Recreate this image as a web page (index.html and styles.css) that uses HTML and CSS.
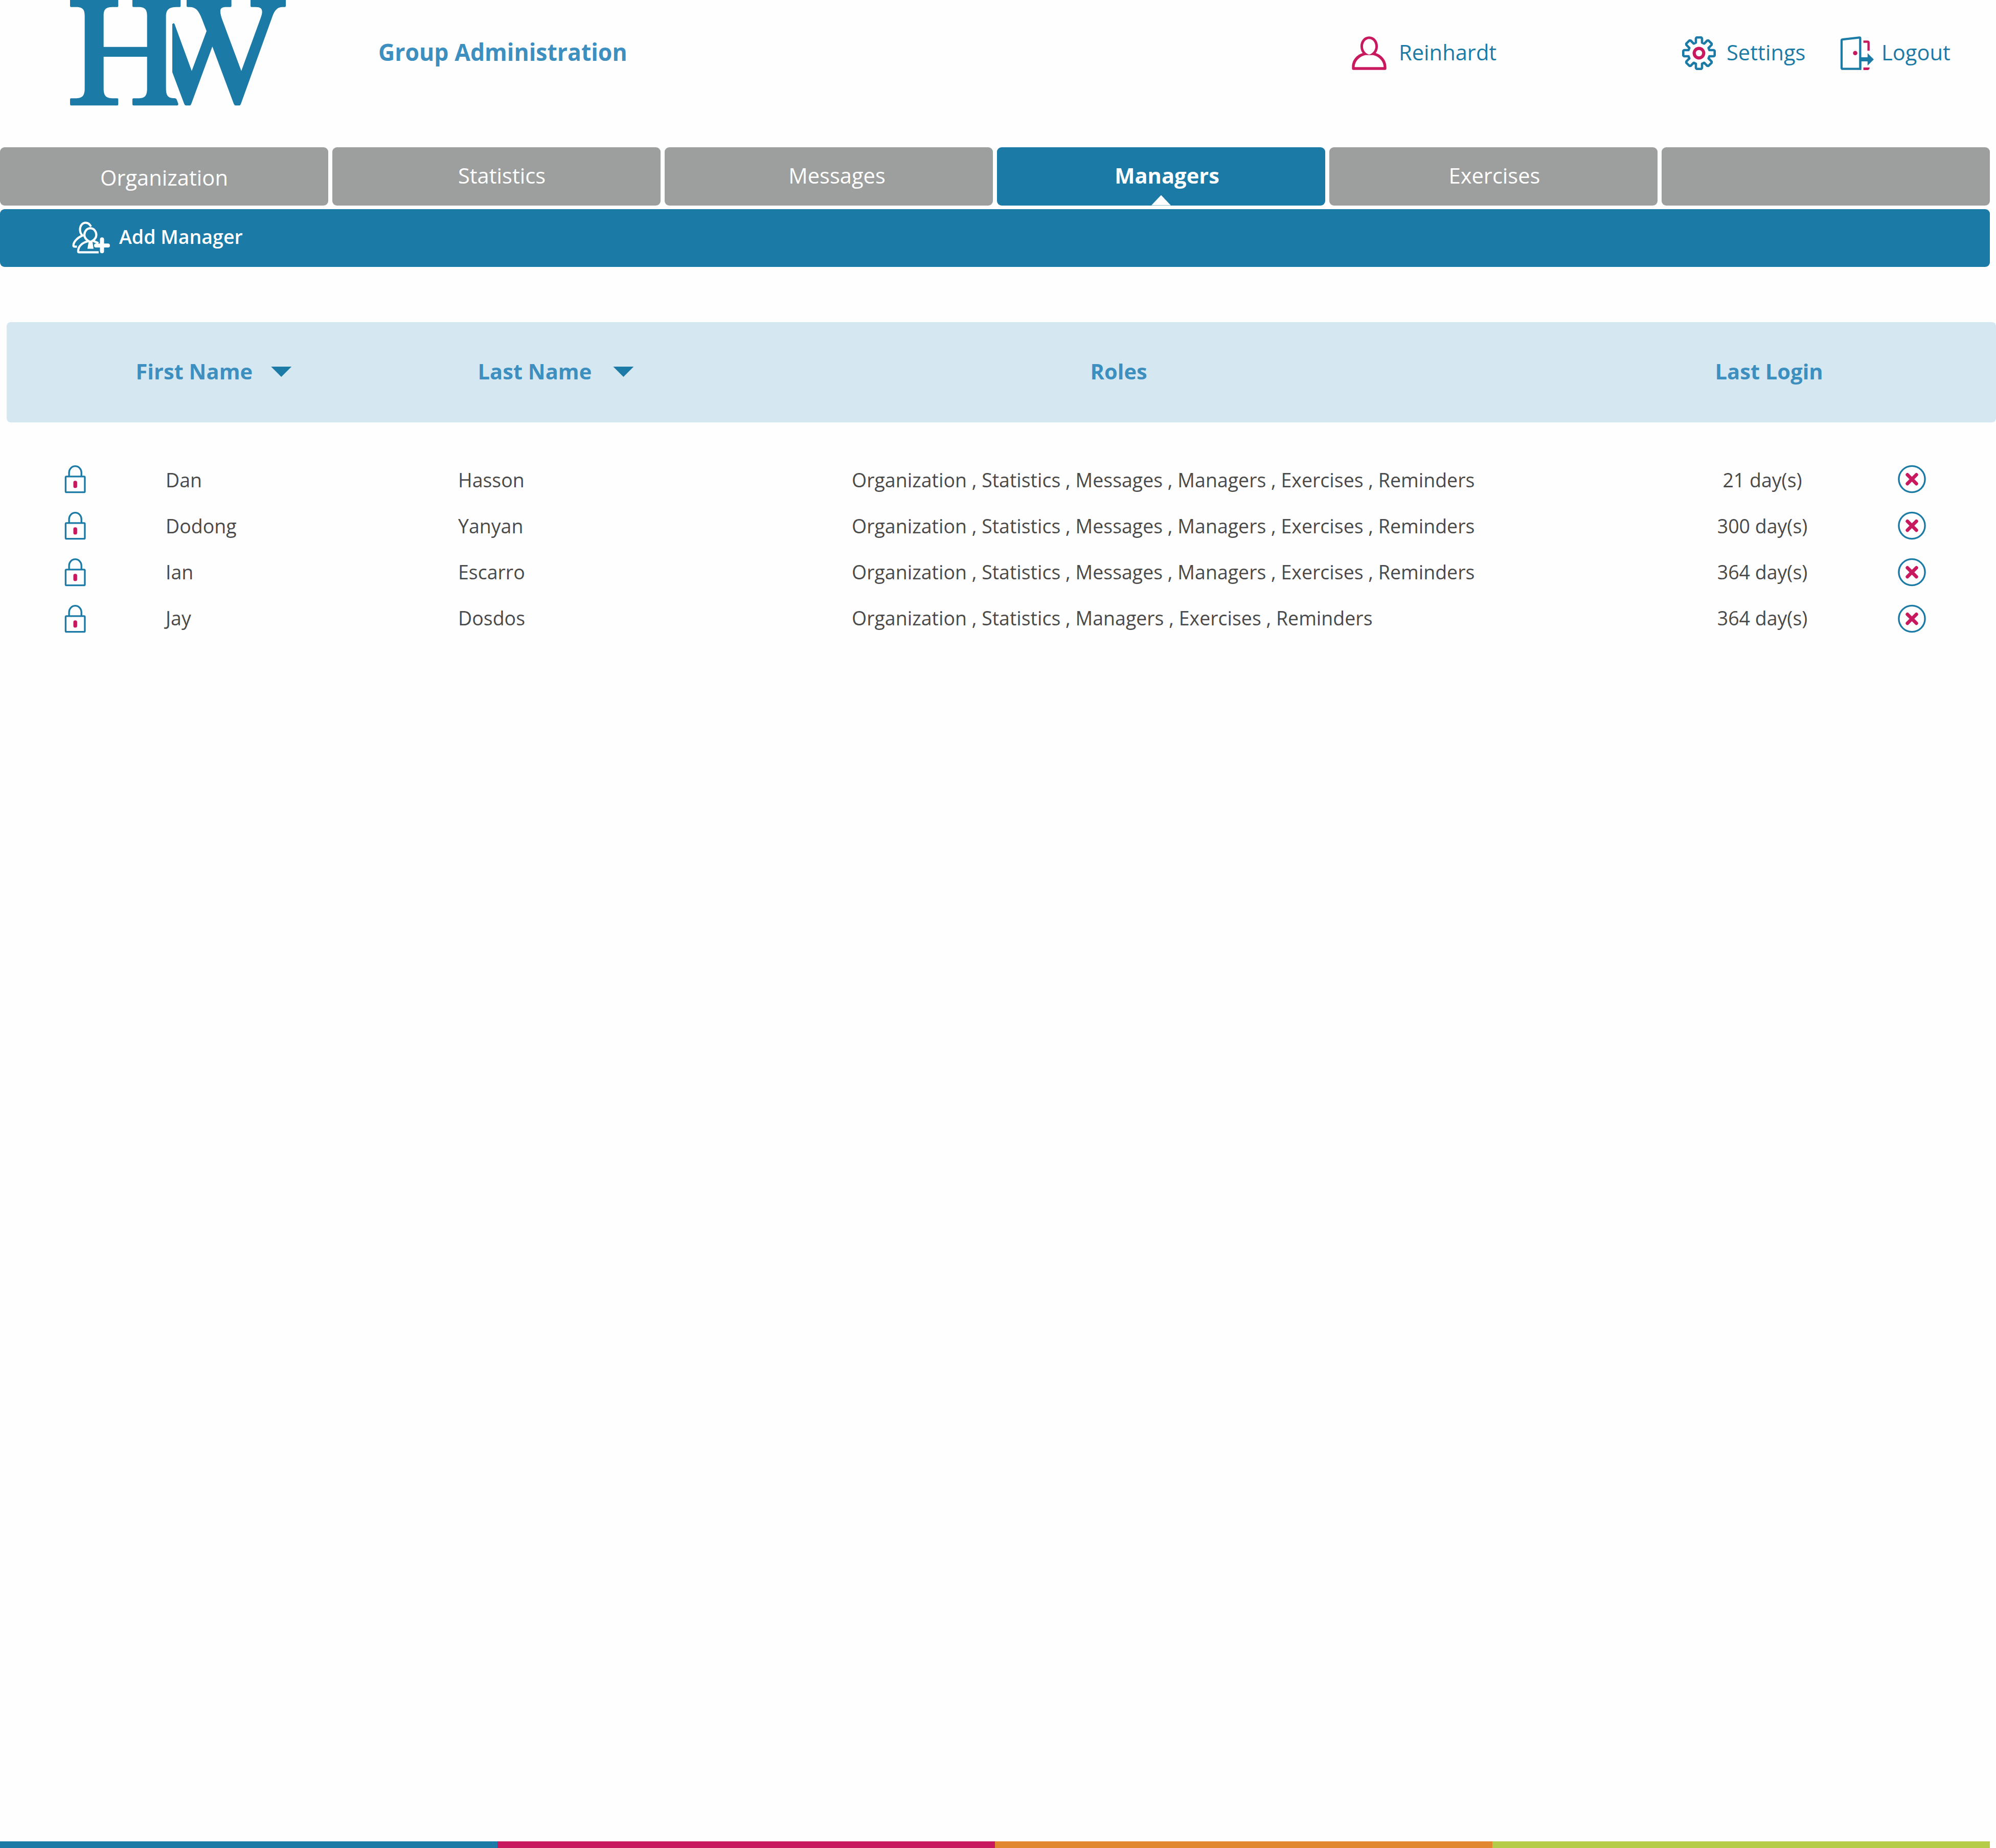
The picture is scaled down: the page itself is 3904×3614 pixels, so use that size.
FILE: index.html
```html
<!DOCTYPE html>
<html lang="en">
<head>
<meta charset="utf-8">
<title>Group Administration</title>
<link rel="stylesheet" href="styles.css">
</head>
<body>
<svg class="defs" width="0" height="0" aria-hidden="true">
  <symbol id="lock" viewBox="139 57 125 167">
    <path d="M166 124V102A36 37 0 0 1 238 102V124" fill="none" stroke="#1b7ba6" stroke-width="10"/>
    <rect x="146" y="125" width="112" height="92" rx="5" fill="none" stroke="#1b7ba6" stroke-width="10"/>
    <rect x="191" y="150" width="22" height="42" rx="10" fill="#c8195f"/>
  </symbol>
  <symbol id="remove" viewBox="0 0 55 55">
    <circle cx="27.5" cy="27.5" r="25.6" fill="none" stroke="#1b7ba6" stroke-width="3.4"/>
    <path d="M18.7 18.9 36.3 36.3M36.3 18.9 18.7 36.3" fill="none" stroke="#c8195f" stroke-width="6.8" stroke-linecap="round"/>
  </symbol>
</svg>

<header class="header">
  <svg class="logo" viewBox="0 0 1500 720" role="img" aria-label="HW">
    <path d="M111 0H394V36Q394 41 388 41H365C325 41 308 50 308 92V275H563V92C563 50 545 41 510 41H483Q477 41 477 35V0H760V35Q760 41 754 41H740C692 41 674 55 674 98V515C674 560 684 576 725 576Q734 576 737 584L746 609Q747 618 739 619H484Q477 619 477 612V583Q477 577 483 577H510C548 577 563 565 563 520V333H308V520C308 565 325 577 365 577H388Q394 577 394 583V612Q394 619 387 619H118Q111 619 111 612V583Q111 577 117 577H142C180 577 197 565 197 520V92C197 50 180 41 142 41H117Q111 41 111 35Z"/>
    <path d="M795 0H1058V35Q1058 41 1052 41H1030C1002 41 993 48 993 66C993 82 998 100 1006 121L1116 416L1230 104C1235 90 1238 80 1238 70C1238 50 1228 41 1200 41H1176Q1170 41 1170 35V0H1377V35Q1377 41 1371 41H1358C1330 41 1313 57 1300 92L1114 608Q1110 619 1102 619H1084Q1076 619 1072 610L946 273L823 608Q819 619 812 619H793Q785 619 781 610L711 424V142Q718 132 724 140L825 416L912 182L885 112C867 64 850 41 812 41H801Q795 41 795 35Z"/>
  </svg>
  <h1 class="title">Group Administration</h1>
  <nav class="user-nav">
    <a class="user-link user">
      <svg width="68" height="66" viewBox="132 92 205 199"><path fill="#c8195f" fill-rule="evenodd" d="M234 93C265 93 286 120 286 150C286 168 281 181 273 191C305 200 336 232 336 272V282Q336 290 328 290H141Q133 290 133 282V272C133 232 163 200 196 191C188 181 183 168 183 150C183 120 204 93 234 93ZM234 108C214 108 198 128 198 152C198 174 214 194 234 200C254 194 271 174 271 152C271 128 255 108 234 108ZM149 274H320C320 240 292 210 257 203H213C178 210 149 240 149 274Z"/></svg>
      <span>Reinhardt</span>
    </a>
    <a class="user-link settings">
      <svg width="66" height="66" viewBox="-33 -33 66 66"><path fill="none" stroke="#1b7ba6" stroke-width="4.6" stroke-linejoin="round" d="M-6-20.5L-6-29L-4.5-30.7L4.5-30.7L6-29L6-20.5L10.25-18.74L16.26-24.75L18.53-24.89L24.89-18.53L24.75-16.26L18.74-10.25L20.5-6L29-6L30.7-4.5L30.7 4.5L29 6L20.5 6L18.74 10.25L24.75 16.26L24.89 18.53L18.53 24.89L16.26 24.75L10.25 18.74L6 20.5L6 29L4.5 30.7L-4.5 30.7L-6 29L-6 20.5L-10.25 18.74L-16.26 24.75L-18.53 24.89L-24.89 18.53L-24.75 16.26L-18.74 10.25L-20.5 6L-29 6L-30.7 4.5L-30.7-4.5L-29-6L-20.5-6L-18.74-10.25L-24.75-16.26L-24.89-18.53L-18.53-24.89L-16.26-24.75L-10.25-18.74Z"/><circle r="9.3" fill="none" stroke="#c8195f" stroke-width="6.2"/></svg>
      <span>Settings</span>
    </a>
    <a class="user-link logout">
      <svg width="66" height="66" viewBox="0 0 66 66"><path fill="none" stroke="#1b7ba6" stroke-width="4.3" stroke-linejoin="round" d="M3 8Q3 6.4 5 6.2L38 2.3Q39.4 2.2 39.4 3.6V63.7H5Q3 63.7 3 61.7Z"/><path fill="#1b7ba6" d="M39.4 60V66H41.5V49H53.8V57.3L66 45.2L53.8 33V41H41V60Z"/><circle cx="29.6" cy="32.7" r="4.3" fill="#c8195f"/><path fill="none" stroke="#c8195f" stroke-width="4.4" d="M45.6 10.5H53.7Q55.7 10.5 55.7 12.5V28.3"/><path fill="#c8195f" d="M45.6 61H57.9Q57.9 66 53.5 66H45.6Z"/></svg>
      <span>Logout</span>
    </a>
  </nav>
</header>

<nav class="tabs">
  <a class="tab organization"><span>Organization</span></a>
  <a class="tab statistics"><span>Statistics</span></a>
  <a class="tab messages"><span>Messages</span></a>
  <a class="tab managers active"><span>Managers</span></a>
  <a class="tab exercises"><span>Exercises</span></a>
  <a class="tab"></a>
</nav>

<div class="toolbar">
  <svg width="75" height="63" viewBox="0 0 75 63" fill="none" stroke="#fff" stroke-width="4.2"><path d="M37 10C34 4.5 30.5 2.6 26.5 2.6C19.5 2.6 15.5 9 15.5 16C15.5 21 17.5 25 20.5 27.5C10 32 2.6 40 2.6 47Q2.6 49.3 4.8 49.3H9.5"/><path d="M35.7 13.4C42.5 13.4 47.4 19.5 47.4 26.5C47.4 32.5 42 38 35.7 40C29.5 38 24 32.5 24 26.5C24 19.5 29 13.4 35.7 13.4Z"/><path d="M31 39C20 41 12 49 11.8 58V58.5Q11.8 60.3 13.8 60.3H52M41 38L51.5 42.5"/><path fill="#fff" stroke="none" d="M32.5 39H39.7L42 53.5H30ZM54.5 43.3V35.3Q54.5 31.3 58.5 31.3T62.5 35.3V43.3H70.2Q74 43.3 74 47.2T70.2 51H62.5V58.3Q62.5 62.3 58.5 62.3T54.5 58.3V51H46.8Q43 51 43 47.2T46.8 43.3Z"/></svg>
  <span>Add Manager</span>
</div>

<main class="content">
  <div class="table-head">
    <div class="head-first">First Name <i class="sort"></i></div>
    <div class="head-last">Last Name <i class="sort"></i></div>
    <div class="head-roles">Roles</div>
    <div class="head-login">Last Login</div>
  </div>
  <div class="table-body">
    <div class="icons locks">
      <svg><use href="#lock"/></svg>
      <svg><use href="#lock"/></svg>
      <svg><use href="#lock"/></svg>
      <svg><use href="#lock"/></svg>
    </div>
    <div class="rows">
      <div class="row"><span>Dan</span><span>Hasson</span><span>Organization , Statistics , Messages , Managers , Exercises , Reminders</span><span class="login">21 day(s)</span></div>
      <div class="row"><span>Dodong</span><span>Yanyan</span><span>Organization , Statistics , Messages , Managers , Exercises , Reminders</span><span class="login">300 day(s)</span></div>
      <div class="row"><span>Ian</span><span>Escarro</span><span>Organization , Statistics , Messages , Managers , Exercises , Reminders</span><span class="login">364 day(s)</span></div>
      <div class="row"><span>Jay</span><span>Dosdos</span><span>Organization , Statistics , Managers , Exercises , Reminders</span><span class="login">364 day(s)</span></div>
    </div>
    <div class="icons removes">
      <svg><use href="#remove"/></svg>
      <svg><use href="#remove"/></svg>
      <svg><use href="#remove"/></svg>
      <svg><use href="#remove"/></svg>
    </div>
  </div>
</main>

<footer class="stripes"><i class="blue"></i><i class="pink"></i><i class="orange"></i><i class="green"></i></footer>
</body>
</html>
```
FILE: styles.css
```css
* { box-sizing: border-box; }

body {
  margin: 0;
  width: 3904px;
  height: 3614px;
  display: flex;
  flex-direction: column;
  background: #fefefe;
  color: #4a4a4a;
  font-family: "Open Sans", sans-serif;
  font-size: 41.67px;
  line-height: 60px;
  white-space: nowrap;
  overflow: hidden;
}

svg { display: block; flex: none; }
.defs { position: absolute; }

.header {
  display: flex;
  height: 288px;
  padding-left: 100px;
  flex: none;
}
.logo { width: 500px; height: 240px; fill: #1b7ba6; }
.title {
  margin: 71px 0 0 140px;
  width: 1900px;
  font-size: 47px;
  font-weight: 700;
  color: #3d8fbf;
  transform-origin: left;
  transform: scaleX(.948);
}
.user-nav { display: flex; height: 208px; color: #1b7ba6; }
.user-link { display: flex; align-items: center; }
.user-link span { margin-bottom: 4px; }
.user { width: 646px; gap: 24px; margin-left: 4px; }
.settings { width: 309px; gap: 21px; }
.logout { gap: 15px; }

.tabs { display: flex; gap: 8px; height: 121px; flex: none; }
.tab {
  position: relative;
  width: 642px;
  height: 113.5px;
  padding-bottom: 3px;
  display: flex;
  align-items: center;
  justify-content: center;
  border-radius: 9px;
  background: #9d9f9e;
  color: #fff;
}
.organization { padding: 5px 0 0; }
.statistics { padding-left: 21px; }
.messages { padding-left: 32px; }
.managers { padding-left: 23px; }
.exercises { padding-left: 4px; }
.active { background: #1b7ba6; font-weight: 700; }
.active::after {
  content: "";
  position: absolute;
  left: 302px;
  bottom: 0;
  width: 38px;
  height: 20px;
  background: #fefefe;
  clip-path: polygon(50% 0, 100% 100%, 0 100%);
}

.toolbar {
  display: flex;
  align-items: center;
  gap: 17px;
  width: 3892px;
  height: 113px;
  flex: none;
  padding: 0 0 3px 141px;
  border-radius: 9px;
  background: #1b7ba6;
  color: #fff;
  font-size: 37.5px;
  font-weight: 600;
}
.toolbar span { margin-bottom: 2px; }

.content { flex: 1; padding-top: 108px; }
.table-head {
  display: grid;
  grid-template-columns: 669px 1198px 1222px 1fr;
  align-items: center;
  height: 196px;
  margin-left: 12.5px;
  padding: 0 0 5px 253px;
  border-radius: 8px;
  background: #d5e7f0;
  color: #3d8fbf;
  font-weight: 700;
}
.head-first, .head-last { display: flex; align-items: center; }
.sort {
  width: 40px;
  height: 20px;
  margin: 3px 0 0 36px;
  background: #1b7ba6;
  clip-path: polygon(0 0, 100% 0, 50% 100%);
}
.head-last .sort { margin-left: 42px; }

.table-body { display: flex; padding: 83px 0 0 126px; }
.icons { display: flex; flex-direction: column; gap: 35px; }
.icons svg { height: 56px; }
.locks svg { width: 42px; }
.removes svg { width: 55px; }
.rows {
  width: 3543.5px;
  margin-top: -15px;
  padding-left: 156px;
  font-size: 37.5px;
}
.row {
  display: grid;
  grid-template-columns: 572px 770px 1681px 200px;
  align-items: center;
  height: 90px;
}
.login { text-align: center; }

.stripes { display: flex; width: 3892px; height: 13px; flex: none; }
.stripes i { flex: 1; height: 12.5px; }
.blue { background: #1b7ba6; }
.pink { background: #c8195f; }
.orange { background: #e08730; }
.green { background: #b4cc48; }
```
